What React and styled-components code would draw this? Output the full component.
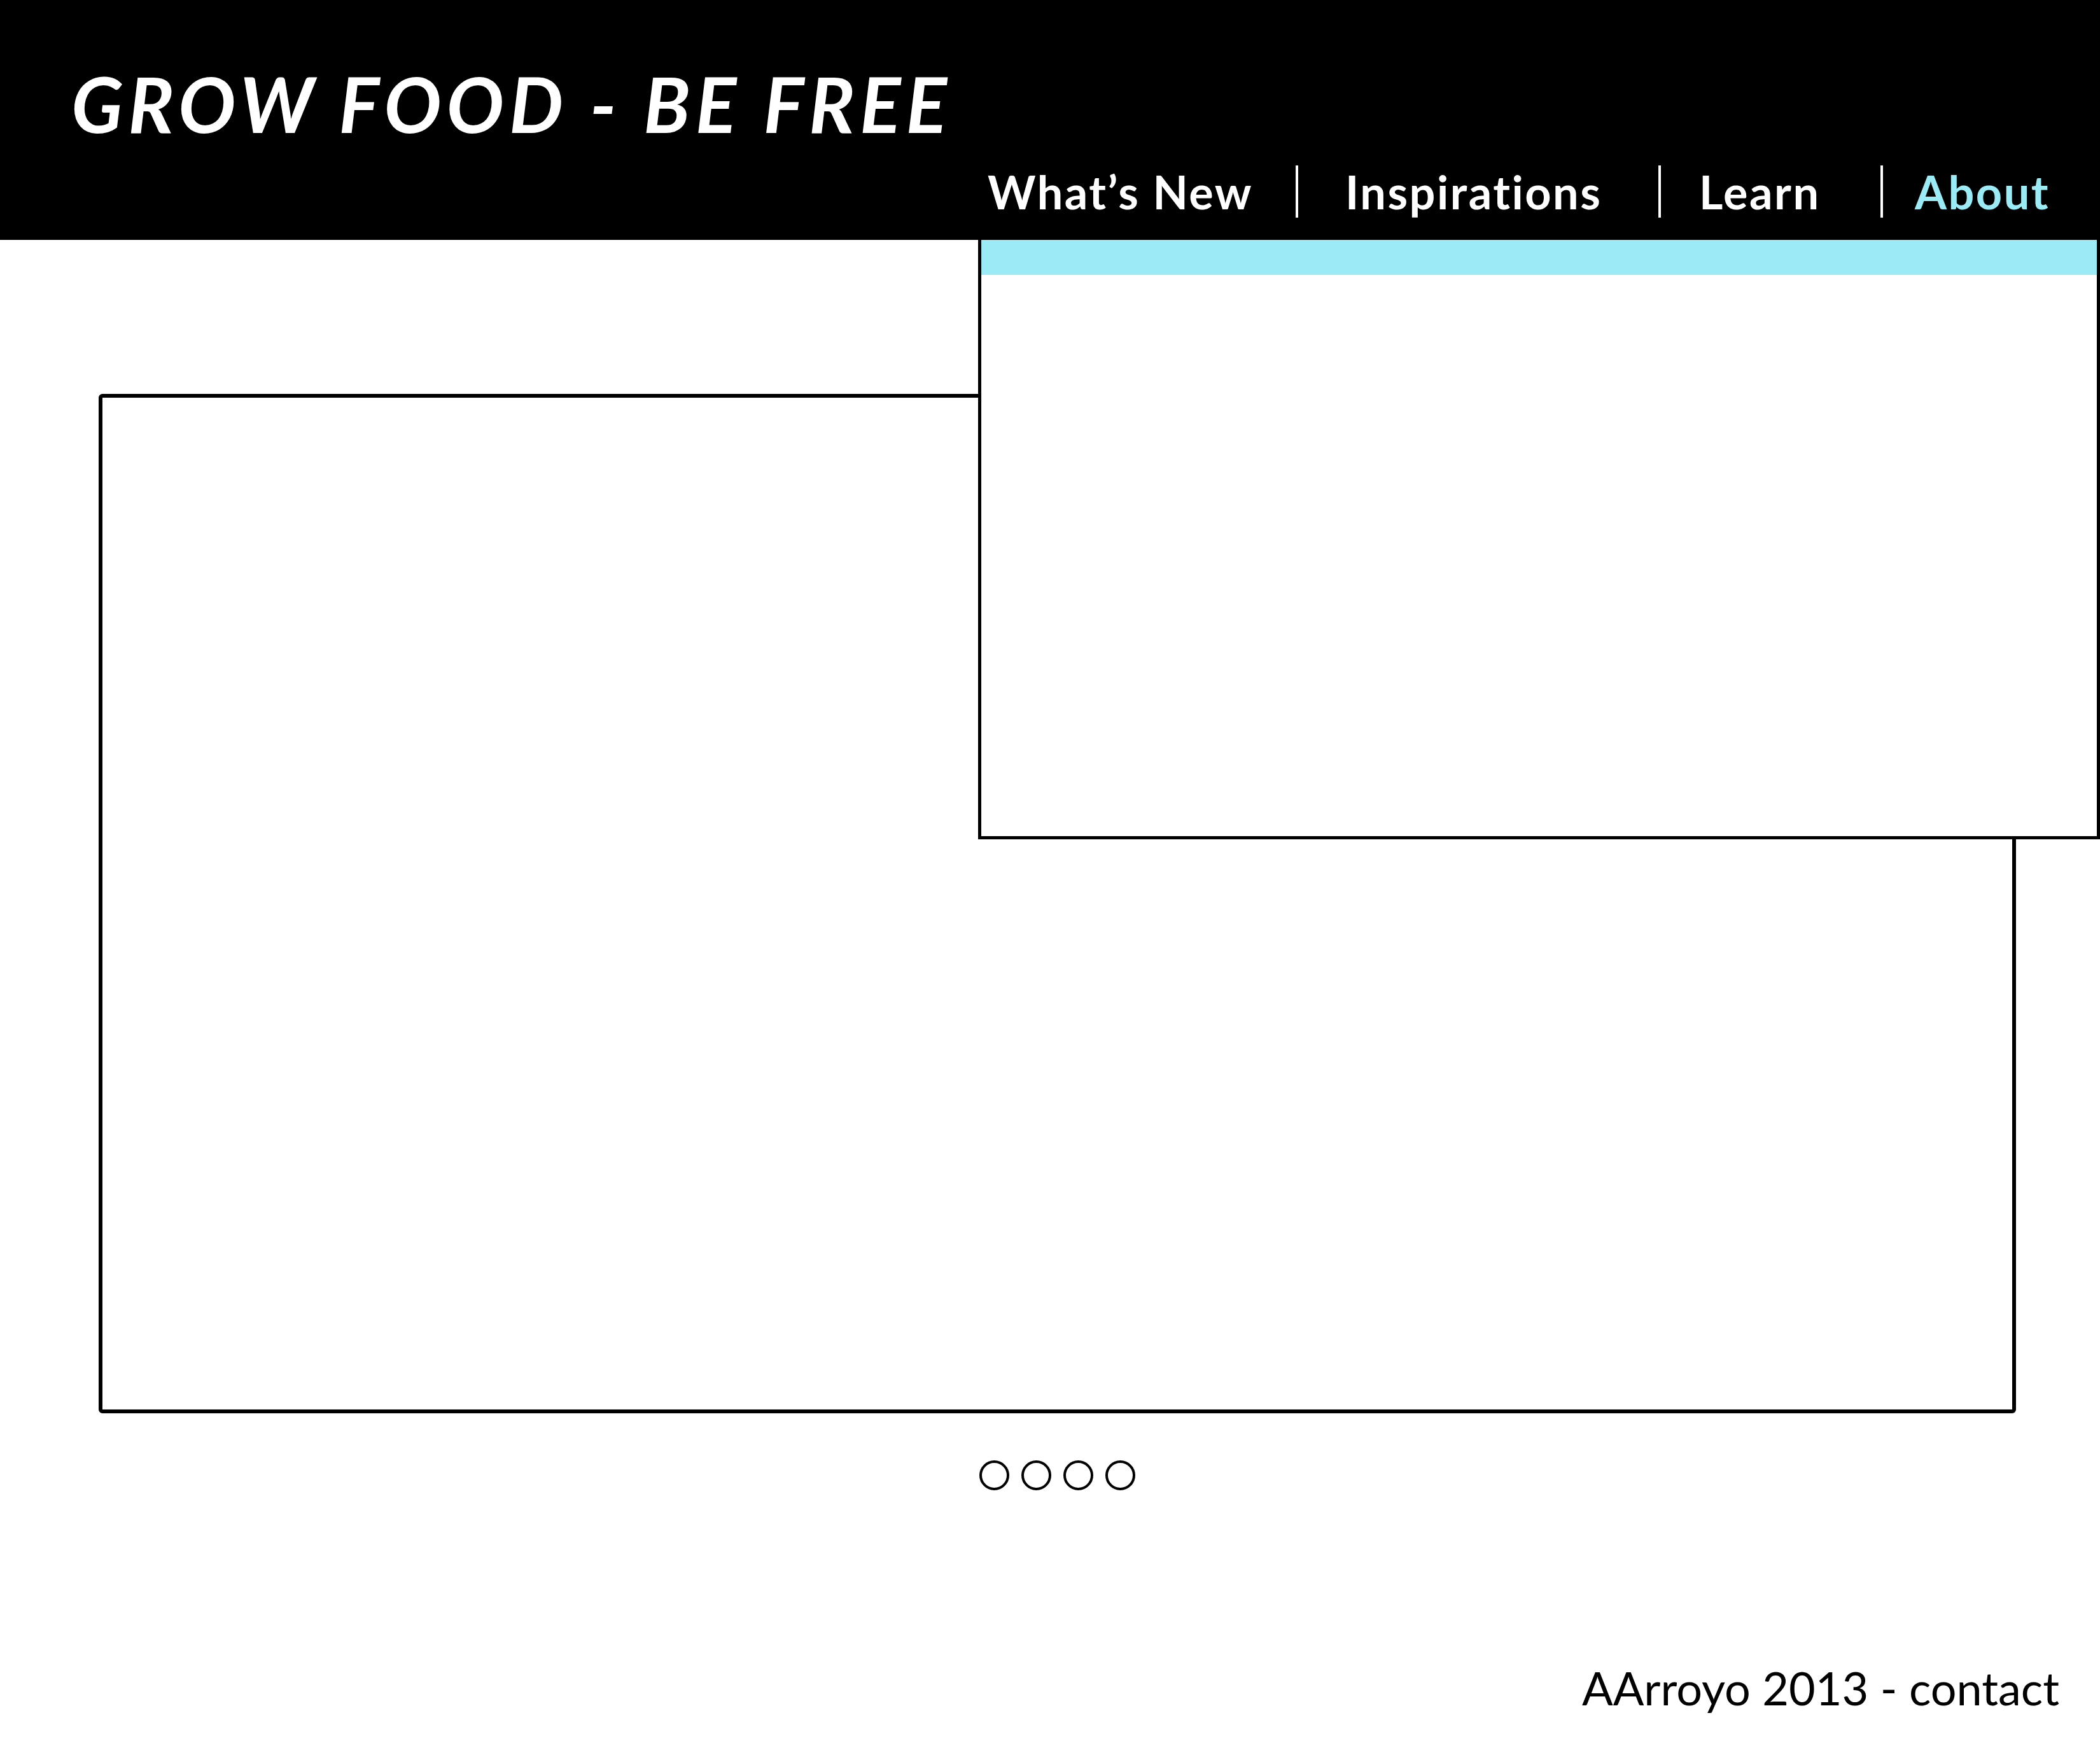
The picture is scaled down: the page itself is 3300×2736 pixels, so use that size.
import React from "react";
import styled, { createGlobalStyle } from "styled-components";

const GlobalStyle = createGlobalStyle`
  html, body {
    margin: 0;
    padding: 0;
    background: #fff;
  }
  body {
    font-family: Lato, "Open Sans", "Liberation Sans", sans-serif;
  }
`;

const navItems = [
  { label: "What\u2019s New", width: 484, pad: 0 },
  { label: "Inspirations", width: 570, pad: 74 },
  { label: "Learn", width: 349, pad: 60 },
  { label: "About", width: 345, pad: 50, active: true },
];

const App = () => {
  return (
    <Page>
      <GlobalStyle />
      {/* header */}
      <Header>
        <Title>GROW FOOD - BE FREE</Title>
        <Nav>
          {navItems.map((item, index) => (
            <NavItem
              key={item.label}
              $w={item.width}
              $pad={item.pad}
              $sep={index > 0}
              $active={item.active}
            >
              {item.label}
            </NavItem>
          ))}
        </Nav>
        {/* open menu under About */}
        <Dropdown>
          <DropdownBar />
        </Dropdown>
      </Header>

      {/* slider */}
      <Main>
        <Slide />
        <Dots>
          {Array.from({ length: 4 }).map((_, index) => (
            <Dot key={index} />
          ))}
        </Dots>
      </Main>

      <Footer>AArroyo 2013 - contact</Footer>
    </Page>
  );
};

export default App;

// Styled Components
const Page = styled.div`
  width: 3300px;
  min-height: 2736px;
  display: flex;
  flex-direction: column;
  overflow: hidden;
`;

const Header = styled.header`
  position: relative;
  height: 377px;
  background: #000;
  display: flex;
  flex-direction: column;
  box-sizing: border-box;
  padding-top: 93px;
  z-index: 2;
`;

const Title = styled.h1`
  margin: 0 0 0 112px;
  font-family: Lato, "Open Sans", sans-serif;
  font-style: italic;
  font-weight: 700;
  font-size: 120px;
  line-height: 140px;
  color: #fff;
  letter-spacing: 8px;
`;

const Nav = styled.nav`
  display: flex;
  justify-content: flex-end;
  margin-top: 27px;
  height: 82px;
`;

const NavItem = styled.div`
  width: ${(p) => p.$w}px;
  box-sizing: border-box;
  padding-left: ${(p) => p.$pad}px;
  border-left: ${(p) => (p.$sep ? "4px solid #fff" : "none")};
  font-family: Lato, "Open Sans", sans-serif;
  font-weight: 700;
  font-size: 72px;
  line-height: 82px;
  letter-spacing: 2.5px;
  color: ${(p) => (p.$active ? "#9aebf5" : "#fff")};
  white-space: nowrap;
`;

const Dropdown = styled.div`
  position: absolute;
  top: 377px;
  left: 1537px;
  width: 1763px;
  height: 942px;
  box-sizing: border-box;
  background: #fff;
  border: 5px solid #000;
  border-top: none;
`;

const DropdownBar = styled.div`
  height: 55px;
  background: #9aebf5;
`;

const Main = styled.main`
  display: flex;
  flex-direction: column;
  align-items: flex-start;
  padding: 242px 0 0 155px;
`;

const Slide = styled.div`
  width: 3013px;
  height: 1602px;
  box-sizing: border-box;
  border: 6px solid #000;
  border-radius: 6px;
`;

const Dots = styled.div`
  width: 3013px;
  display: flex;
  justify-content: center;
  gap: 19px;
  margin-top: 74px;
`;

const Dot = styled.span`
  width: 47px;
  height: 47px;
  box-sizing: border-box;
  border: 4px solid #000;
  border-radius: 50%;
`;

const Footer = styled.footer`
  margin-top: auto;
  padding: 0 64px 44px 0;
  text-align: right;
  font-family: Lato, "Open Sans", sans-serif;
  font-weight: 400;
  font-size: 72px;
  line-height: 80px;
  color: #000;
`;
